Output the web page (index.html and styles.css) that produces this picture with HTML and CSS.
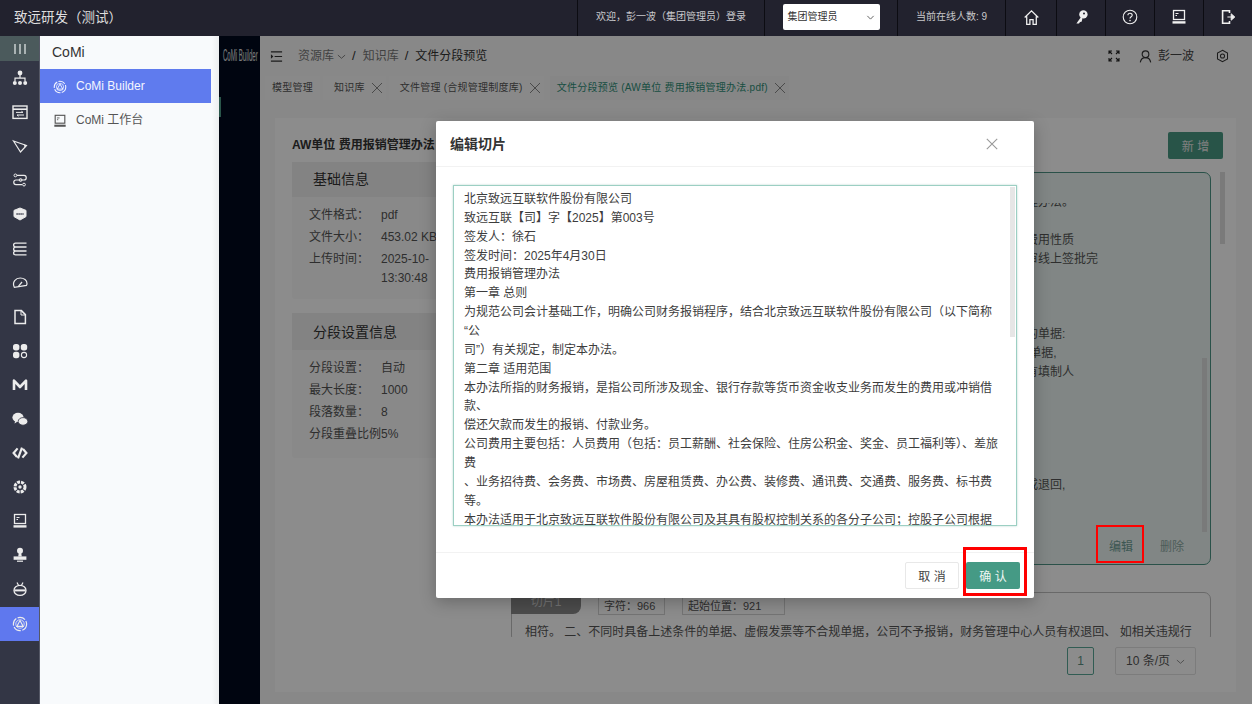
FILE: index.html
```html
<!DOCTYPE html>
<html lang="zh-CN">
<head>
  <meta charset="UTF-8" />
  <meta name="viewport" content="width=device-width, initial-scale=1.0"/>
  <title>文件分段预览</title>
  <link rel="stylesheet" href="styles.css">
</head>
<body>
  <svg class="defs" width="0" height="0">
    <symbol id="i-comi" viewBox="0 0 16 16">
      <circle cx="8" cy="8" r="6.6" fill="none" stroke="currentColor" stroke-width="1.2" stroke-dasharray="8 1.5"/>
      <circle cx="8" cy="8" r="4.2" fill="none" stroke="currentColor" stroke-width=".8"/>
      <path d="M8 4.6 11.2 10.4H4.8Z" fill="none" stroke="currentColor" stroke-width="1.1"/>
    </symbol>
    <symbol id="i-laptop" viewBox="0 0 16 16">
      <rect x="2.5" y="1.5" width="11" height="9" fill="none" stroke="currentColor" stroke-width="1.3"/>
      <path d="M4.5 4.5h3M4.5 6.5h1.5" stroke="currentColor" stroke-width="1"/>
      <path d="M1.5 12.2h13V14.6h-13Z" fill="currentColor"/>
    </symbol>
  </svg>

  <header class="topbar">
    <div class="brand">致远研发（测试）</div>
    <div class="top-cell welcome">欢迎，彭一波（集团管理员）登录</div>
    <div class="top-cell role-cell">
      <div class="role-select">
        <span>集团管理员</span>
        <svg width="9" height="9" viewBox="0 0 10 10"><path d="M1.5 3.2 5 6.8l3.5-3.6" fill="none" stroke="#666" stroke-width="1.1"/></svg>
      </div>
    </div>
    <div class="top-cell online">当前在线人数: 9</div>
    <div class="top-cell top-icon">
      <svg width="17" height="17" viewBox="0 0 16 16"><path d="M1.6 8 8 1.8 14.4 8M3.5 6.8V14.4H6.5V10h3v4.4h3V6.8" fill="none" stroke="currentColor" stroke-width="1.2"/></svg>
    </div>
    <div class="top-cell top-icon">
      <svg width="16" height="16" viewBox="0 0 16 16"><circle cx="10.4" cy="5.4" r="4.2" fill="currentColor"/><path d="M8.4 7.4 3.4 14.6H6l1-1.6 1.6-.2.8-3" fill="currentColor"/><circle cx="11" cy="4.6" r="1" fill="#22222e"/></svg>
    </div>
    <div class="top-cell top-icon">
      <svg width="16" height="16" viewBox="0 0 16 16"><circle cx="8" cy="8" r="6.8" fill="none" stroke="currentColor" stroke-width="1.1"/><path d="M5.9 6.2C5.9 3.6 10.2 3.6 10.2 6.2 10.2 7.8 8 7.8 8 9.6" fill="none" stroke="currentColor" stroke-width="1.1"/><circle cx="8" cy="11.6" r=".8" fill="currentColor"/></svg>
    </div>
    <div class="top-cell top-icon">
      <svg width="16" height="16"><use href="#i-laptop"/></svg>
    </div>
    <div class="top-cell top-icon">
      <svg width="16" height="16" viewBox="0 0 16 16"><path d="M9.5 4V1.8H2.6V14.2H9.5V12" fill="none" stroke="currentColor" stroke-width="1.6"/><path d="M7.4 8H12M11.2 4.8 14.8 8l-3.6 3.2Z" fill="currentColor" stroke="currentColor" stroke-width="1"/></svg>
    </div>
  </header>

  <div class="layout">
    <nav class="rail">
      <div class="rail-toggle"><span></span><span></span><span></span></div>
      <div class="rail-item">
        <svg viewBox="0 0 16 16"><circle cx="8" cy="3" r="2.4" fill="currentColor"/><path d="M8 5v3M3 11V8.2H13V11" fill="none" stroke="currentColor" stroke-width="1.2"/><circle cx="2.8" cy="13" r="2" fill="currentColor"/><circle cx="8" cy="13" r="2" fill="currentColor"/><circle cx="13.2" cy="13" r="2" fill="currentColor"/></svg>
      </div>
      <div class="rail-item">
        <svg viewBox="0 0 16 16"><rect x="1" y="2" width="14" height="12.4" fill="none" stroke="currentColor" stroke-width="1.4"/><path d="M1 5.2H15" stroke="currentColor" stroke-width="1.6"/><path d="M4 8.4h7l-1.6-1.2M12 11H5l1.6 1.2" fill="none" stroke="currentColor" stroke-width="1"/></svg>
      </div>
      <div class="rail-item">
        <svg viewBox="0 0 16 16"><path d="M1.5 3 14.5 7.5 8.5 14Z" fill="none" stroke="currentColor" stroke-width="1.2"/><path d="M12 6.5 14.8 7.6 12.6 10Z" fill="currentColor"/></svg>
      </div>
      <div class="rail-item">
        <svg viewBox="0 0 16 16"><path d="M5 3.4H12C15 3.4 15 8 12 8H4C1 8 1 12.6 4 12.6H10" fill="none" stroke="currentColor" stroke-width="1.2"/><circle cx="3.4" cy="3.4" r="1.4" fill="none" stroke="currentColor"/><circle cx="12" cy="12.6" r="1.4" fill="none" stroke="currentColor"/><circle cx="8.6" cy="8" r="1.4" fill="none" stroke="currentColor"/></svg>
      </div>
      <div class="rail-item">
        <svg viewBox="0 0 16 16"><path d="M8 2 14 4.4V10.6L8 14 2 10.6V4.4Z" fill="currentColor" stroke="currentColor" stroke-linejoin="round"/><path d="M4.4 8h7.2" stroke="#333645" stroke-width="1.6" stroke-dasharray="1.4 .6"/></svg>
      </div>
      <div class="rail-item">
        <svg viewBox="0 0 16 16"><path d="M14.5 2.2H3.5C1 2.2 1 6 3.5 6H14.5M3.5 6C1 6 1 10 3.5 10H14.5M3.5 10C1 10 1 13.8 3.5 13.8H14.5" fill="none" stroke="currentColor" stroke-width="1.3"/></svg>
      </div>
      <div class="rail-item">
        <svg viewBox="0 0 16 16"><path d="M2.4 12.4C-.4 6.8 4 3 8.2 3 12 3 15 5.4 15 8.4 15 9 14.8 9.8 14.4 10.4L2.4 12.4Z" fill="none" stroke="currentColor" stroke-width="1.2"/><path d="M6.2 11.6 10 7" stroke="currentColor" stroke-width="1.2"/></svg>
      </div>
      <div class="rail-item">
        <svg viewBox="0 0 16 16"><path d="M3 1.6H9.4L13.4 5.6V14.4H3Z" fill="none" stroke="currentColor" stroke-width="1.5"/><path d="M9 1.6V6H13.4" fill="none" stroke="currentColor" stroke-width="1"/></svg>
      </div>
      <div class="rail-item">
        <svg viewBox="0 0 16 16"><rect x="1" y="1" width="6.4" height="6.4" rx="2.6" fill="currentColor"/><rect x="8.8" y="1" width="6.4" height="6.4" rx="2.6" fill="currentColor"/><rect x="1" y="8.8" width="6.4" height="6.4" rx="2.6" fill="currentColor"/><circle cx="12" cy="12" r="2.6" fill="none" stroke="currentColor" stroke-width="1.1"/></svg>
      </div>
      <div class="rail-item">
        <svg viewBox="0 0 16 16"><path d="M2 13V3.6L8 10 14 3.6V13" fill="none" stroke="currentColor" stroke-width="2.6" stroke-linejoin="round"/></svg>
      </div>
      <div class="rail-item">
        <svg viewBox="0 0 16 16"><ellipse cx="6" cy="6.4" rx="5.6" ry="4.6" fill="currentColor"/><path d="M3 10 2.6 12.6 5.6 10.6Z" fill="currentColor"/><ellipse cx="11" cy="10.4" rx="4.8" ry="3.8" fill="currentColor" stroke="#333645" stroke-width=".8"/></svg>
      </div>
      <div class="rail-item">
        <svg viewBox="0 0 16 16"><path d="M5.6 3.4 1.6 8l3.4 4M10.4 12.6 14.4 8 11 4M10 2.6 6 13.4" fill="none" stroke="currentColor" stroke-width="2.2"/></svg>
      </div>
      <div class="rail-item">
        <svg viewBox="0 0 16 16"><circle cx="8" cy="8" r="5" fill="none" stroke="currentColor" stroke-width="3" stroke-dasharray="3 1"/><circle cx="8" cy="8" r="1.7" fill="currentColor"/></svg>
      </div>
      <div class="rail-item">
        <svg viewBox="0 0 16 16"><use href="#i-laptop"/></svg>
      </div>
      <div class="rail-item">
        <svg viewBox="0 0 16 16"><circle cx="8" cy="3.8" r="3" fill="currentColor"/><path d="M6.8 6h2.4l.6 3.6H6.2Z" fill="currentColor"/><path d="M1.6 9.4H14.4V12.8H1.6Z" fill="currentColor"/><path d="M5 14.2H11" stroke="currentColor" stroke-width="1.2"/></svg>
      </div>
      <div class="rail-item">
        <svg viewBox="0 0 16 16"><ellipse cx="8" cy="9.4" rx="6" ry="5" fill="none" stroke="currentColor" stroke-width="1.3"/><path d="M2.4 9.4H13.6" stroke="currentColor" stroke-width="2"/><path d="M5 1.4 6.6 4.6M11 1.4 9.4 4.6" stroke="currentColor" stroke-width="1.2"/></svg>
      </div>
      <div class="rail-item is-active">
        <svg viewBox="0 0 16 16"><use href="#i-comi"/></svg>
      </div>
    </nav>

    <aside class="submenu">
      <div class="submenu-title">CoMi</div>
      <div class="submenu-item is-active">
        <svg width="14" height="14"><use href="#i-comi"/></svg>
        <span>CoMi Builder</span>
      </div>
      <div class="submenu-item">
        <svg width="14" height="14"><use href="#i-laptop"/></svg>
        <span>CoMi 工作台</span>
      </div>
    </aside>

    <div class="content">
      <div class="logo-strip">
        <div class="logo-text">CoMi Builder</div>
        <div class="strip-handle"></div>
      </div>

      <main class="main">
        <div class="crumbbar">
          <svg class="fold" width="13" height="13" viewBox="0 0 14 14"><path d="M1 2H13M5 7H13M1 12H13" stroke="#333" stroke-width="1.3"/><path d="M1 4.6 3.6 7 1 9.4Z" fill="#333"/></svg>
          <span class="crumb">资源库</span>
          <svg class="crumb-arrow" width="9" height="9" viewBox="0 0 10 10"><path d="M1 3.4 5 7l4-3.6" fill="none" stroke="#777" stroke-width="1"/></svg>
          <span class="crumb-sep">/</span>
          <span class="crumb">知识库</span>
          <span class="crumb-sep">/</span>
          <span class="crumb crumb-now">文件分段预览</span>
          <div class="crumb-right">
            <svg width="12" height="12" viewBox="0 0 12 12"><path d="M1 1 4 4M1 4V1H4M11 1 8 4M8 1H11V4M1 11 4 8M1 8V11H4M11 11 8 8M8 11H11V8" fill="none" stroke="#222" stroke-width="1.1"/></svg>
            <div class="user">
              <svg width="13" height="13" viewBox="0 0 14 14"><circle cx="7" cy="4.6" r="3.6" fill="none" stroke="#333" stroke-width="1.2"/><path d="M1.4 13.4C2 9.6 4.4 8.2 7 8.2s5 1.4 5.6 5.2" fill="none" stroke="#333" stroke-width="1.2"/></svg>
              <span>彭一波</span>
            </div>
            <svg width="13" height="14" viewBox="0 0 14 14"><path d="M7 .8 12.4 3.9V10.1L7 13.2 1.6 10.1V3.9Z" fill="none" stroke="#333" stroke-width="1.1"/><circle cx="7" cy="7" r="2.2" fill="none" stroke="#333" stroke-width="1.1"/></svg>
          </div>
        </div>

        <div class="tabs">
          <div class="tab tab-first">模型管理</div>
          <div class="tab">知识库<span class="tab-x"></span></div>
          <div class="tab">文件管理 (合规管理制度库)<span class="tab-x"></span></div>
          <div class="tab is-active">文件分段预览 (AW单位 费用报销管理办法.pdf)<span class="tab-x"></span></div>
        </div>

        <section class="card">
          <div class="card-head">
            <div class="file-title">AW单位 费用报销管理办法</div>
            <button class="btn-add">新 增</button>
          </div>
          <div class="card-body">
            <div class="info-col">
              <div class="panel panel-base">
                <div class="panel-head">基础信息</div>
                <div class="panel-body">
                  <div class="info-row"><span class="info-label">文件格式：</span><span>pdf</span></div>
                  <div class="info-row"><span class="info-label">文件大小：</span><span>453.02 KB</span></div>
                  <div class="info-row"><span class="info-label">上传时间：</span><span>2025-10-<br>13:30:48</span></div>
                </div>
              </div>
              <div class="panel">
                <div class="panel-head panel-head-tall">分段设置信息</div>
                <div class="panel-body">
                  <div class="info-row"><span class="info-label">分段设置：</span><span>自动</span></div>
                  <div class="info-row"><span class="info-label">最大长度：</span><span>1000</span></div>
                  <div class="info-row"><span class="info-label">段落数量：</span><span>8</span></div>
                  <div class="info-row"><span class="info-label">分段重叠比例</span><span>5%</span></div>
                </div>
              </div>
            </div>

            <div class="chunk-col">
              <div class="chunk-list">
                <div class="chunk chunk-on">
                  <div class="chunk-scroll">
                    <div>理办法。</div>
                    <div>&nbsp;</div>
                    <div>费用性质</div>
                    <div>审线上签批完</div>
                    <div>&nbsp;</div>
                    <div>&nbsp;</div>
                    <div>&nbsp;</div>
                    <div>的单据:</div>
                    <div>&nbsp;单据,</div>
                    <div>有填制人</div>
                    <div>&nbsp;</div>
                    <div>&nbsp;</div>
                    <div>&nbsp;</div>
                    <div>&nbsp;</div>
                    <div>&nbsp;</div>
                    <div>或退回,</div>
                  </div>
                  <div class="chunk-bar"></div>
                  <div class="chunk-actions">
                    <span>编辑</span>
                    <span class="act-del">删除</span>
                  </div>
                </div>
                <div class="chunk">
                  <div class="chunk-tags">
                    <span class="chunk-no">切片1</span>
                    <span class="chunk-meta">字符：966</span>
                    <span class="chunk-meta">起始位置：921</span>
                  </div>
                  <div class="chunk-line">相符。 二、不同时具备上述条件的单据、虚假发票等不合规单据，公司不予报销，财务管理中心人员有权退回、 如相关违规行</div>
                </div>
              </div>
              <div class="list-bar"></div>
              <div class="pager">
                <span class="page-no">1</span>
                <span class="page-size">10 条/页
                  <svg width="9" height="9" viewBox="0 0 10 10"><path d="M1 3.4 5 7l4-3.6" fill="none" stroke="#888" stroke-width="1"/></svg>
                </span>
              </div>
            </div>
          </div>
        </section>
      </main>

      <div class="mask"></div>

      <div class="mark mark-edit"></div>

      <div class="modal">
        <div class="modal-head">
          <span>编辑切片</span>
          <svg width="12" height="12" viewBox="0 0 12 12"><path d="M.8.8 11.2 11.2M11.2.8.8 11.2" stroke="#999" stroke-width="1.1"/></svg>
        </div>
        <div class="modal-body">
          <div class="editor">
            <div>北京致远互联软件股份有限公司</div>
            <div>致远互联【司】字【2025】第003号</div>
            <div>签发人：徐石</div>
            <div>签发时间：2025年4月30日</div>
            <div>费用报销管理办法</div>
            <div>第一章 总则</div>
            <div>为规范公司会计基础工作，明确公司财务报销程序，结合北京致远互联软件股份有限公司（以下简称“公</div>
            <div>司”）有关规定，制定本办法。</div>
            <div>第二章 适用范围</div>
            <div>本办法所指的财务报销，是指公司所涉及现金、银行存款等货币资金收支业务而发生的费用或冲销借款、</div>
            <div>偿还欠款而发生的报销、付款业务。</div>
            <div>公司费用主要包括：人员费用（包括：员工薪酬、社会保险、住房公积金、奖金、员工福利等）、差旅费</div>
            <div>、业务招待费、会务费、市场费、房屋租赁费、办公费、装修费、通讯费、交通费、服务费、标书费等。</div>
            <div>本办法适用于北京致远互联软件股份有限公司及其具有股权控制关系的各分子公司；控股子公司根据</div>
            <div class="editor-bar"></div>
          </div>
        </div>
        <div class="modal-foot">
          <button class="btn-cancel">取 消</button>
          <button class="btn-ok">确 认</button>
          <div class="mark mark-ok"></div>
        </div>
      </div>
    </div>
  </div>
</body>
</html>
```

FILE: styles.css
```css
* {
  box-sizing: border-box;
}

html, body {
  height: 100%;
}

body {
  margin: 0;
  font-family: "Liberation Sans", "Noto Sans CJK SC", sans-serif;
  font-size: 12px;
  line-height: 18.86px;
  color: #555;
  overflow: hidden;
  display: flex;
  flex-direction: column;
}

.defs {
  position: absolute;
}

button {
  font-family: inherit;
  cursor: pointer;
}

/* top bar */
.topbar {
  height: 36px;
  flex: none;
  display: flex;
  background: #22222e;
  color: #c9c9cc;
  font-size: 10px;
}

.brand {
  flex: 1;
  padding-left: 14px;
  font-size: 13.5px;
  line-height: 35px;
  color: #dedede;
}

.top-cell {
  display: flex;
  align-items: center;
  justify-content: center;
  padding-bottom: 2px;
  border-left: 1px solid #0c0c12;
}

.welcome { width: 187px; }
.role-cell { width: 133px; }
.online { width: 108px; }

.top-icon {
  width: 49px;
  color: #f0f0f0;
}

.top-icon:nth-of-type(5) { width: 51px; }

.role-select {
  width: 97px;
  height: 26px;
  padding: 0 5px;
  display: flex;
  align-items: center;
  justify-content: space-between;
  background: #fff;
  border-radius: 2px;
  color: #333;
}

.layout {
  flex: 1;
  display: flex;
  min-height: 0;
}

/* left rail */
.rail {
  width: 40px;
  flex: none;
  background: #333645;
  color: #ececec;
  border-right: 1px solid #555866;
}

.rail-toggle {
  height: 25px;
  display: flex;
  align-items: center;
  justify-content: center;
  gap: 3px;
  background: #4b5a5c;
}

.rail-toggle span {
  width: 2px;
  height: 10px;
  background: #a9b2b3;
}

.rail-item {
  height: 34.1px;
  display: flex;
  align-items: center;
  justify-content: center;
}

.rail-item svg {
  width: 16px;
  height: 16px;
}

.rail-item.is-active {
  background: #5f78ee;
}

/* second level menu */
.submenu {
  width: 179px;
  flex: none;
  padding-right: 8px;
  background: linear-gradient(90deg, #f8fafc 96%, #eceeef);
  color: #555;
}

.submenu-title {
  height: 33px;
  padding-left: 12px;
  font-size: 14px;
  line-height: 32px;
  color: #333;
}

.submenu-item {
  height: 34px;
  padding: 1px 0 0 13px;
  display: flex;
  align-items: center;
  gap: 9px;
}

.submenu-item.is-active {
  background: #5f7bee;
  color: #f4f6ff;
}

/* content behind the dialog */
.content {
  flex: 1;
  display: flex;
  position: relative;
  min-width: 0;
}

.logo-strip {
  width: 41px;
  flex: none;
  position: relative;
  background: #000a1e;
}

.logo-text {
  width: 90px;
  margin: 10px 0 0 -24px;
  font-size: 16px;
  line-height: 20px;
  white-space: nowrap;
  text-align: center;
  color: #e2e2e2;
  transform: scaleX(.38);
}

.strip-handle {
  position: absolute;
  left: 0;
  top: 61px;
  width: 2px;
  height: 20px;
  background: #4d9d88;
}

.main {
  flex: 1;
  min-width: 0;
  display: flex;
  flex-direction: column;
  background: #f7f7f7;
  padding-bottom: 12px;
}

.crumbbar {
  height: 40px;
  flex: none;
  padding: 1px 23px 0 10px;
  display: flex;
  align-items: center;
  color: #777;
}

.fold { margin-right: 15px; }
.crumb-arrow { margin-left: 3px; }

.crumb-sep {
  margin: 0 7px 0 6px;
  color: #333;
  font-size: 13px;
}

.crumb-now { color: #333; }

.crumb-right {
  margin-left: auto;
  display: flex;
  align-items: center;
  gap: 19px;
  color: #444;
}

.user {
  display: flex;
  align-items: center;
  gap: 6px;
  margin-right: 3px;
}

.tabs {
  height: 24px;
  flex: none;
  padding-left: 5px;
  display: flex;
  gap: 3px;
}

.tab {
  padding: 0 4px 0 11px;
  display: flex;
  align-items: center;
  gap: 7px;
  background: #fafafa;
  font-size: 10px;
  letter-spacing: .25px;
  color: #555;
}

.tab-first {
  padding: 0 7px;
}

.tab-x {
  width: 10px;
  height: 10px;
  background:
    linear-gradient(45deg, transparent 46%, #888 46%, #888 54%, transparent 54%),
    linear-gradient(-45deg, transparent 46%, #888 46%, #888 54%, transparent 54%);
}

.tab.is-active {
  margin-left: 3px;
  padding-left: 7px;
  color: #2f8f78;
  background: #f4f4f4;
}

.card {
  flex: 1;
  min-height: 0;
  margin: 18px 16px 0 15px;
  padding: 14px 13px 0 17px;
  display: flex;
  flex-direction: column;
  background: #fff;
}

.card-head {
  height: 27px;
  flex: none;
  display: flex;
  align-items: center;
  justify-content: space-between;
}

.file-title {
  font-weight: bold;
  color: #333;
}

.btn-add {
  width: 55px;
  height: 27px;
  border: none;
  border-radius: 2px;
  background: #4a9a84;
  color: #e8e8e8;
  font-size: 12px;
}

.card-body {
  flex: 1;
  min-height: 0;
  padding-top: 3px;
  display: flex;
  gap: 21px;
}

.info-col {
  width: 198px;
  flex: none;
}

.panel {
  margin-bottom: 14px;
  background: #fafafa;
  border-radius: 3px;
  padding-bottom: 11px;
}

.panel-base {
  height: 137px;
}

.panel-head {
  height: 35px;
  padding-left: 21px;
  background: #efefef;
  font-size: 14px;
  line-height: 35px;
  color: #333;
}

.panel-head-tall {
  height: 37px;
  line-height: 38px;
}

.panel-body {
  padding: 9px 17px 0;
}

.info-row {
  display: flex;
  margin-bottom: 3.2px;
}

.info-label {
  width: 72px;
  flex: none;
}

.chunk-col {
  flex: 1;
  min-width: 0;
  position: relative;
  padding-top: 10px;
}

.chunk-list {
  height: 465px;
  width: 700px;
  overflow: hidden;
  display: flex;
  flex-direction: column;
  gap: 27px;
}

.chunk {
  flex: none;
  position: relative;
  border: 1px solid #c0c0c0;
  border-radius: 7px;
}

.chunk-on {
  height: 393px;
  background: #ebf5f2;
  border-color: #4d9485;
}

.chunk-scroll {
  position: absolute;
  left: 514px;
  top: 30px;
  width: 160px;
  height: 330px;
  overflow: hidden;
  white-space: nowrap;
}

.chunk-scroll > div:first-child {
  margin-top: -10px;
}

.chunk-bar {
  position: absolute;
  right: 3px;
  top: 185px;
  width: 5px;
  height: 174px;
  background: #dcdfde;
}

.chunk-actions {
  position: absolute;
  right: 26px;
  bottom: 7px;
  display: flex;
  gap: 27px;
  color: #6f9f97;
}

.act-del { color: #8ca8a3; }

.chunk-tags {
  display: flex;
  align-items: flex-start;
  margin: -1px 0 0 -1px;
  font-size: 11px;
}

.chunk-no {
  width: 70px;
  height: 22px;
  border-radius: 0 0 8px 0;
  background: #8a8a8a;
  color: #d0d0d0;
  text-align: center;
  font-size: 12px;
  line-height: 20px;
}

.chunk-meta {
  width: 67px;
  height: 23px;
  margin-left: 17px;
  padding: 4px 5px 0;
  border: 1px solid #d4d4d4;
  color: #555;
  line-height: 18px;
}

.chunk-meta:nth-child(3) {
  width: 103px;
}

.chunk-line {
  padding: 8px 13px 0;
  white-space: nowrap;
}

.list-bar {
  position: absolute;
  right: -2px;
  top: 10px;
  width: 5px;
  height: 72px;
  background: #dedede;
}

.pager {
  margin-top: 10px;
  padding-right: 27px;
  display: flex;
  justify-content: flex-end;
  gap: 21px;
}

.page-no {
  width: 27px;
  height: 28px;
  border: 1px solid #5aa897;
  border-radius: 2px;
  text-align: center;
  line-height: 26px;
  color: #5b8f83;
}

.page-size {
  width: 81px;
  height: 28px;
  padding: 0 10px;
  display: flex;
  align-items: center;
  justify-content: space-between;
  border: 1px solid #e2e2e2;
  border-radius: 2px;
}

/* dialog */
.mask {
  position: absolute;
  inset: 0;
  background: rgba(0, 0, 0, .45);
}

.modal {
  position: absolute;
  left: 217px;
  top: 85px;
  width: 598px;
  height: 477px;
  background: #fff;
  border-radius: 2px;
  box-shadow: 0 4px 16px rgba(0, 0, 0, .25);
  display: flex;
  flex-direction: column;
}

.modal-head {
  height: 46px;
  flex: none;
  padding: 1px 36px 0 14px;
  display: flex;
  align-items: center;
  justify-content: space-between;
  border-bottom: 1px solid #f2f2f2;
  font-size: 14px;
  font-weight: bold;
  color: #333;
}

.modal-body {
  height: 386px;
  flex: none;
  padding: 18px 17px 0;
  border-bottom: 1px solid #f2f2f2;
}

.editor {
  position: relative;
  height: 341px;
  padding: 4px 12px 0 10px;
  overflow: hidden;
  border: 1px solid #9ccfc3;
  box-shadow: 0 0 2px rgba(77, 157, 136, .4);
  color: #3d3d3d;
}

.editor-bar {
  position: absolute;
  right: 1px;
  top: 1px;
  width: 5px;
  height: 150px;
  background: #e6e6e6;
}

.modal-foot {
  flex: 1;
  position: relative;
  padding: 9px 14px 0 0;
  display: flex;
  justify-content: flex-end;
  gap: 7px;
}

.btn-cancel,
.btn-ok {
  width: 54px;
  height: 27px;
  border-radius: 2px;
  font-size: 12px;
}

.btn-cancel {
  background: #fff;
  border: 1px solid #e8e8e8;
  color: #444;
}

.btn-ok {
  background: #459a85;
  border: none;
  color: #eef6f3;
}

/* red annotation boxes from the screenshot */
.mark {
  position: absolute;
  border: 2px solid #f00;
}

.mark-edit {
  left: 877px;
  top: 489px;
  width: 48px;
  height: 38px;
}

.mark-ok {
  right: 7px;
  top: -6px;
  width: 64px;
  height: 49px;
  border-width: 3px;
}
```
